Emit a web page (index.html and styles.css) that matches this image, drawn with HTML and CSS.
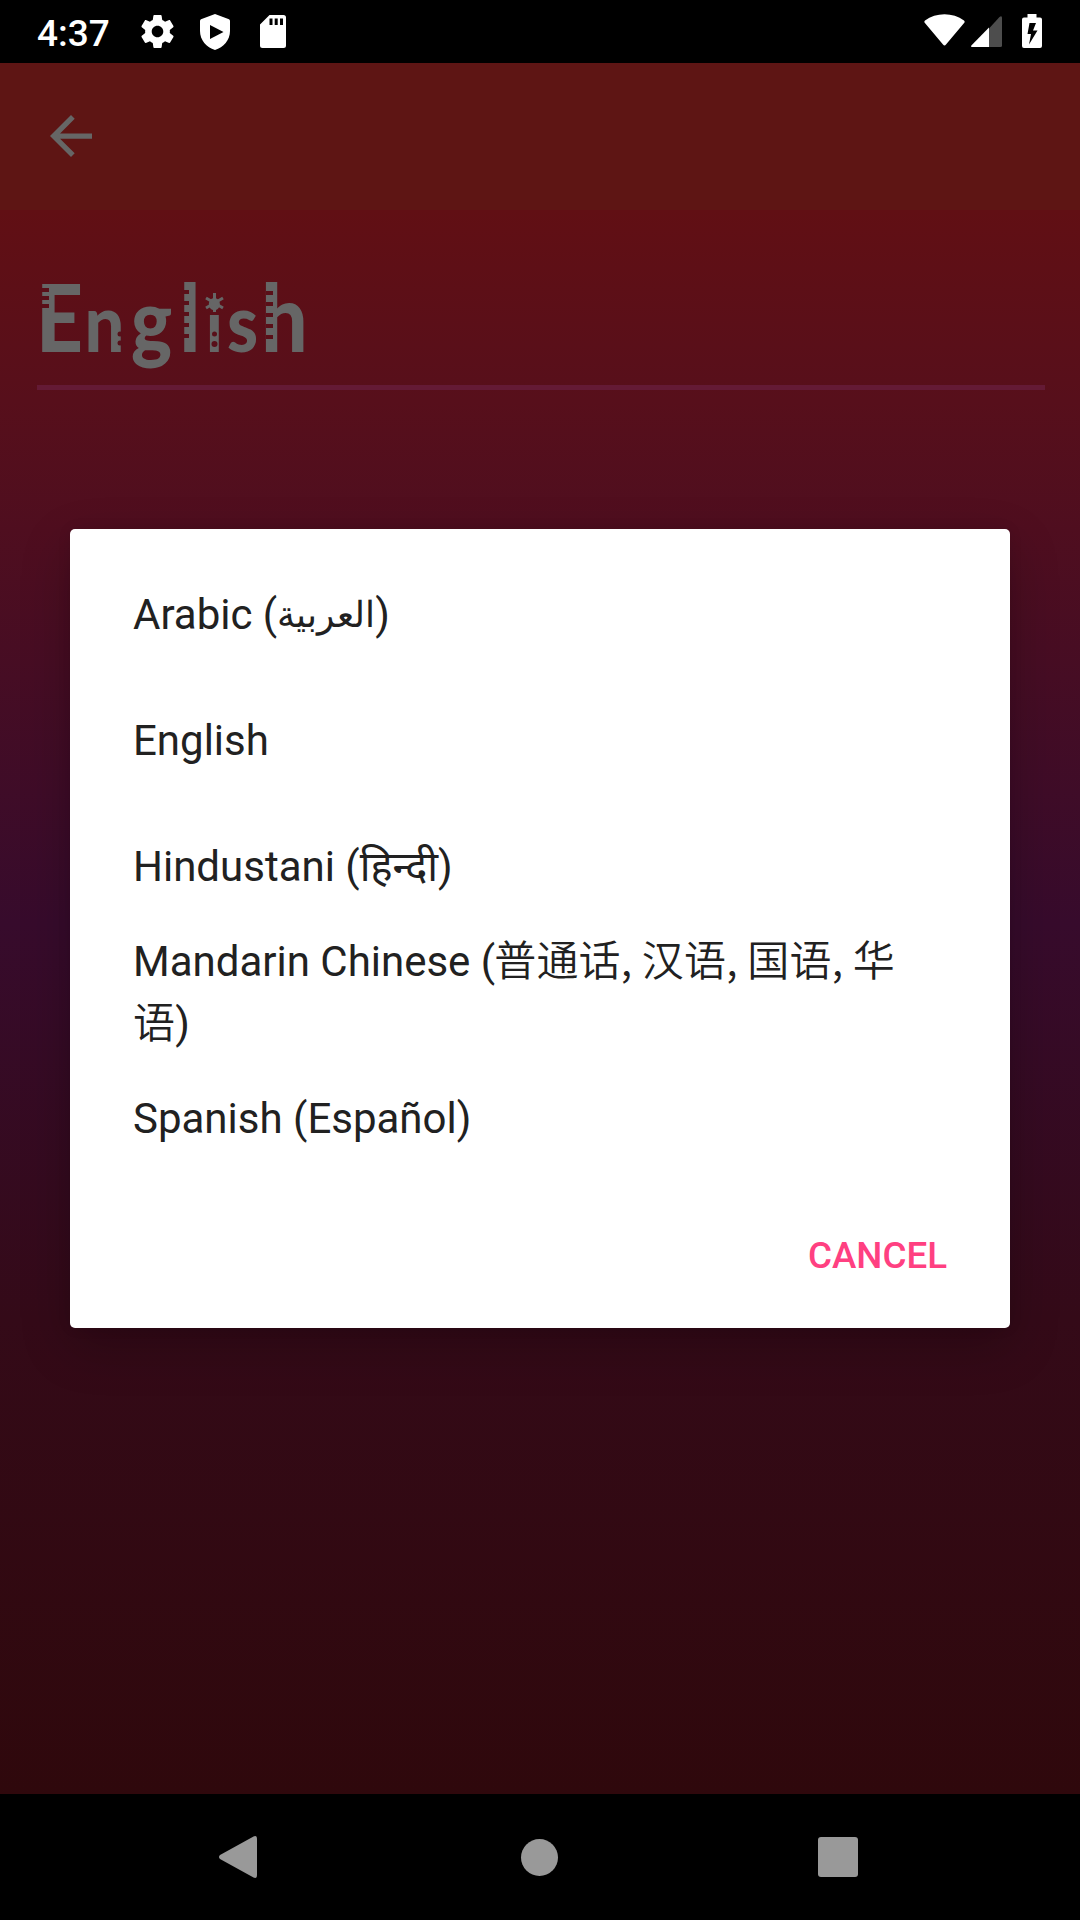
FILE: index.html
```
<!DOCTYPE html>
<html lang="en">
<head>
<meta charset="utf-8">
<title>Language</title>
<link rel="stylesheet" href="styles.css">
</head>
<body>
<div class="screen">
  <header class="status">
    <span class="clock">4:37</span>
    <svg class="ic-gear" viewBox="2 2 20 20"><path fill="#fff" d="M19.43 12.98c.04-.32.07-.64.07-.98s-.03-.66-.07-.98l2.11-1.65c.19-.15.24-.42.12-.64l-2-3.46c-.12-.22-.39-.3-.61-.22l-2.49 1c-.52-.4-1.08-.73-1.69-.98l-.38-2.65C14.46 2.18 14.25 2 14 2h-4c-.25 0-.46.18-.49.42l-.38 2.65c-.61.25-1.17.59-1.69.98l-2.49-1c-.23-.09-.49 0-.61.22l-2 3.46c-.13.22-.07.49.12.64l2.11 1.65c-.04.32-.07.65-.07.98s.03.66.07.98l-2.11 1.65c-.19.15-.24.42-.12.64l2 3.46c.12.22.39.3.61.22l2.49-1c.52.4 1.08.73 1.69.98l.38 2.65c.03.24.24.42.49.42h4c.25 0 .46-.18.49-.42l.38-2.65c.61-.25 1.17-.59 1.69-.98l2.49 1c.23.09.49 0 .61-.22l2-3.46c.12-.22.07-.49-.12-.64l-2.11-1.65zM12 15.5c-1.93 0-3.5-1.57-3.5-3.5s1.57-3.5 3.5-3.5 3.5 1.57 3.5 3.5-1.57 3.5-3.5 3.5z"/></svg>
    <svg class="ic-shield" viewBox="0 0 30 36"><path fill="#fff" fill-rule="evenodd" d="M15 0 29 5.300Q30 5.700 30 7V17C30 26 23.500 33.500 15 36 6.500 33.500 0 26 0 17V7Q0 5.700 1 5.300ZM10 11V25L23.500 18Z"/></svg>
    <svg class="ic-sd" viewBox="0 0 26 33"><path fill="#fff" fill-rule="evenodd" d="M9.500 0H23.500Q26 0 26 2.500V30.500Q26 33 23.500 33H2.500Q0 33 0 30.500V9.500ZM9.500 3.500V10H12.500V3.500ZM14.700 3.500V10H17.700V3.500ZM20 3.500V10H23V3.500Z"/></svg>
    <span class="grow"></span>
    <svg class="ic-wifi" viewBox="0 0 41 32"><path fill="#fff" d="M1 6.500C12-2 29-2 40 6.500Q41.200 7.600 40.300 8.700L22 30.500Q20.500 32.300 19 30.500L.7 8.700Q-.2 7.600 1 6.500Z"/></svg>
    <svg class="ic-cell" viewBox="0 0 31 31"><path fill="#4d4d4d" d="M18 12.500 28.500 1Q31-1 31 2V29.500Q31 31 29.500 31H18Z"/><path fill="#fff" d="M18 11.500V31H1Q-.8 31 .6 29.200Z"/></svg>
    <svg class="ic-batt" viewBox="0 0 20 34"><path fill="#fff" d="M5.500 0H14.500V3.500H18Q20 3.500 20 5.500V32Q20 34 18 34H2Q0 34 0 32V5.500Q0 3.500 2 3.500H5.500Z"/><path d="M7.500 9H14L11 16.500H15.500L7 30.500L9 20H5.500Z"/></svg>
  </header>

  <main class="app">
    <div class="toolbar">
      <svg class="back" viewBox="4 4 16 16"><path fill="#666" d="M20 11H7.830l5.590-5.590L12 4l-8 8 8 8 1.410-1.410L7.830 13H20v-2z"/></svg>
    </div>
    <div class="body">
      <svg class="title" viewBox="0 0 360 175">
        <text class="word" transform="scale(.88 1)"><tspan class="cap" x="41" y="142">E</tspan><tspan class="low" x="96">n</tspan><tspan class="gee" x="149">g</tspan><tspan class="cap" x="204">l</tspan><tspan class="eye" x="234">i</tspan><tspan class="low" x="258">s</tspan><tspan class="tall" x="297">h</tspan></text>
        <path class="notches" d="M40 80h9M40 88h9M40 96h9M181 82h8M181 93h8M181 104h8M181 115h8M181 126h8M266 83h7M266 94h7M266 105h7M266 116h7M266 127h7"/>
        <path class="rays" d="M214.500 83V102M206 88 223 98M206 98 223 88"/>
        <g class="holes"><circle cx="120" cy="124" r="2.500"/><circle cx="120" cy="133" r="2.500"/><circle cx="214.500" cy="124" r="2.500"/><circle cx="214.500" cy="134" r="3"/></g>
      </svg>
      <div class="rule"></div>
    </div>
  </main>

  <nav class="nav">
    <svg class="n-back" viewBox="0 0 38 42"><path fill="#999" d="M1 19 34.500.5Q38-1 38 3V39Q38 43 34.500 41.500L1 23Q-1 21 1 19Z"/></svg>
    <span class="n-home"></span>
    <span class="n-recent"></span>
  </nav>

  <section class="dialog">
    <ul class="list">
      <li>Arabic (<bdi class="ar" lang="ar">العربية</bdi>)</li>
      <li>English</li>
      <li><span>Hindustani (<span class="hi" lang="hi">हिन्दी</span>)</span></li>
      <li><span>Mandarin Chinese (<span class="zh" lang="zh-CN">普通话, 汉语, 国语, 华<br>语</span>)</span></li>
      <li>Spanish (Español)</li>
    </ul>
    <div class="actions"><button class="cancel">CANCEL</button></div>
  </section>
</div>
</body>
</html>
```
FILE: styles.css
```
* { box-sizing: border-box; }
body { margin: 0; background: #000; font-family: Roboto, "Noto Sans", "Noto Sans CJK SC", sans-serif; }
svg { display: block; flex: none; }
.screen { position: relative; width: 1080px; height: 1920px; display: flex; flex-direction: column; overflow: hidden; }

.status { height: 63px; display: flex; align-items: flex-start; padding: 0 38px 0 37px; background: #000; }
.clock { width: 103.5px; color: #fff; font-size: 37px; font-weight: 500; line-height: 67px; }
.ic-gear { width: 33px; height: 33px; margin-top: 15px; }
.ic-shield { width: 30px; height: 36px; margin: 14px 0 0 26.5px; }
.ic-sd { width: 26px; height: 33px; margin: 15px 0 0 30px; }
.grow { flex: 1; }
.ic-wifi { width: 41px; height: 32px; margin: 14px 6px 0 0; }
.ic-cell { width: 31px; height: 31px; margin: 16px 20px 0 0; }
.ic-batt { width: 20px; height: 34px; margin-top: 14px; }

.app { flex: 1; display: flex; flex-direction: column; }
.toolbar { height: 147px; padding: 52px 50px; background: #5e1514; }
.body { flex: 1; background: linear-gradient(#610f14, #570f1b 12%, #370b2c 45%, #340a18 70%, #2f080c); }
.back { width: 42px; height: 42px; }
.title { width: 360px; height: 175px; }
.word { fill: #666; font-family: Lato, sans-serif; font-weight: 900; }
.cap, .tall { font-size: 93px; }
.low { font-size: 80px; }
.gee { font-size: 88px; }
.eye { font-size: 73px; }
.notches { fill: none; stroke: #5a0f18; stroke-width: 4; }
.rays { fill: none; stroke: #666; stroke-width: 3; }
.holes { fill: #580f19; }
.rule { height: 5px; margin: 0 35px 0 37px; background: #641a35; }

.nav { height: 126px; display: flex; align-items: center; padding: 0 222px 0 219px; background: #000; }
.n-back { width: 38px; height: 42px; margin-right: 264px; }
.n-home { width: 37px; height: 37px; border-radius: 50%; background: #999; margin-right: auto; }
.n-recent { width: 40px; height: 40px; border-radius: 3px; background: #999; }

/* modal sheet floating above the page */
.dialog { position: absolute; left: 70px; top: 529px; width: 940px; height: 799px; padding-top: 23px; border-radius: 5px; background: #fff; box-shadow: 0 18px 50px rgba(0,0,0,.22), 0 0 14px rgba(0,0,0,.08); }
.list { margin: 0; padding: 0; list-style: none; color: #212121; font-size: 42px; line-height: 62px; }
.list li { height: 126px; padding: 0 63px; display: flex; align-items: center; white-space: pre; }
.ar { font-size: 36px; }
.hi { font-size: 41.5px; }
.zh { font-family: "Noto Sans CJK SC", sans-serif; font-weight: 350; line-height: 1; letter-spacing: .2px; margin-left: -1px; }
.actions { display: flex; justify-content: flex-end; padding: 46px 63px 0; }
.cancel { padding: 0; border: 0; background: none; color: #ff4081; font: 500 36.75px/56px Roboto, sans-serif; }
```
